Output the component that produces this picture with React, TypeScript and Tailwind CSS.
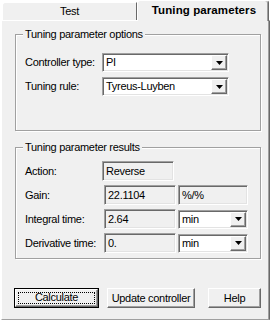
import type { ReactNode } from "react";

const sunken =
  "border border-t-[#a0a0a0] border-l-[#a0a0a0] border-r-white border-b-white shadow-[inset_1px_1px_0_#696969,inset_-1px_-1px_0_#e3e3e3]";

const raised =
  "border border-t-white border-l-white border-r-[#696969] border-b-[#696969] shadow-[inset_-1px_-1px_0_#a0a0a0]";

function Label({ children }: { children: ReactNode }) {
  return <span className="w-[77px] shrink-0">{children}</span>;
}

function Combo({ value, width }: { value: string; width: string }) {
  return (
    <div className={`flex h-[19px] items-center bg-white ${sunken} ${width}`}>
      <span className="flex-1 pl-[3px] leading-none">{value}</span>
      <div
        className={`mr-[1px] flex h-[15px] w-[16px] items-center justify-center bg-[#f0f0f0] ${raised}`}
      >
        <svg width="7" height="4" viewBox="0 0 7 4">
          <path d="M0 0h7L3.5 4z" fill="#000" />
        </svg>
      </div>
    </div>
  );
}

function Edit({ value, width }: { value: string; width: string }) {
  return (
    <div className={`flex h-[20px] items-center bg-[#f0f0f0] pl-[3px] ${sunken} ${width}`}>
      {value}
    </div>
  );
}

function Button({
  label,
  width,
  primary,
}: {
  label: string;
  width: string;
  primary?: boolean;
}) {
  if (primary) {
    return (
      <div className={`h-[20px] border border-black ${width}`}>
        <div className={`flex h-full items-center justify-center p-[2px] ${raised}`}>
          <div className="flex h-full w-full items-center justify-center border border-dotted border-black pb-[1px]">
            {label}
          </div>
        </div>
      </div>
    );
  }
  return (
    <div className={`flex h-[20px] items-center justify-center ${raised} ${width}`}>
      {label}
    </div>
  );
}

function Group({ title, children, className }: { title: string; children: ReactNode; className: string }) {
  return (
    <fieldset
      className={`border border-[#a0a0a0] shadow-[inset_1px_1px_0_#fff,1px_1px_0_#fff] ${className}`}
    >
      <legend className="ml-[7px] bg-[#f0f0f0] px-[2px] leading-[13px]">{title}</legend>
      {children}
    </fieldset>
  );
}

export default function App() {
  return (
    <div className="h-[321px] w-[275px] bg-white font-['Liberation_Sans',Arial,sans-serif] text-[11px] tracking-[-0.3px] text-black">
      <div className="flex h-[20px] items-end">
        <div className="ml-[2px] flex h-[18px] w-[135px] items-center justify-center rounded-tl-[3px] border-l border-t border-r border-l-white border-t-white border-r-[#696969] bg-[#f0f0f0]">
          Test
        </div>
        <div className="relative z-10 -mb-[1px] flex h-[21px] w-[132px] items-center justify-center rounded-t-[3px] border-l border-t border-r border-l-white border-t-white border-r-[#696969] bg-[#f0f0f0] pb-[1px] pl-[2px] text-[11.5px] font-bold tracking-[0.1px] shadow-[inset_-1px_0_0_#a0a0a0]">
          Tuning parameters
        </div>
      </div>
      <div className="ml-[1px] flex h-[300px] w-[269px] flex-col border border-l-white border-t-white border-r-[#696969] border-b-[#a0a0a0] bg-[#f0f0f0] shadow-[inset_-1px_0_0_#a0a0a0]">
        <Group title="Tuning parameter options" className="ml-[13px] mt-[7px] h-[103px] w-[246px]">
          <div className="flex flex-col gap-[5px] pl-[9px] pt-[12px]">
            <div className="flex items-center">
              <Label>Controller type:</Label>
              <Combo value="PI" width="w-[127px]" />
            </div>
            <div className="flex items-center">
              <Label>Tuning rule:</Label>
              <Combo value="Tyreus-Luyben" width="w-[127px]" />
            </div>
          </div>
        </Group>
        <Group title="Tuning parameter results" className="ml-[13px] mt-[10px] h-[118px] w-[246px]">
          <div className="flex flex-col gap-[4px] pl-[9px] pt-[7px]">
            <div className="flex items-center">
              <Label>Action:</Label>
              <Edit value="Reverse" width="w-[72px]" />
            </div>
            <div className="flex items-center gap-[2px]">
              <Label>Gain:</Label>
              <Edit value="22.1104" width="w-[72px]" />
              <Edit value="%/%" width="w-[70px]" />
            </div>
            <div className="flex items-center gap-[2px]">
              <Label>Integral time:</Label>
              <Edit value="2.64" width="w-[72px]" />
              <Combo value="min" width="w-[70px]" />
            </div>
            <div className="flex items-center gap-[2px]">
              <Label>Derivative time:</Label>
              <Edit value="0." width="w-[72px]" />
              <Combo value="min" width="w-[70px]" />
            </div>
          </div>
        </Group>
        <div className="mt-[29px] flex items-center pl-[12px]">
          <Button label="Calculate" width="w-[85px]" primary />
          <div className="ml-[8px]">
            <Button label="Update controller" width="w-[88px]" />
          </div>
          <div className="ml-[13px]">
            <Button label="Help" width="w-[53px]" />
          </div>
        </div>
      </div>
    </div>
  );
}
